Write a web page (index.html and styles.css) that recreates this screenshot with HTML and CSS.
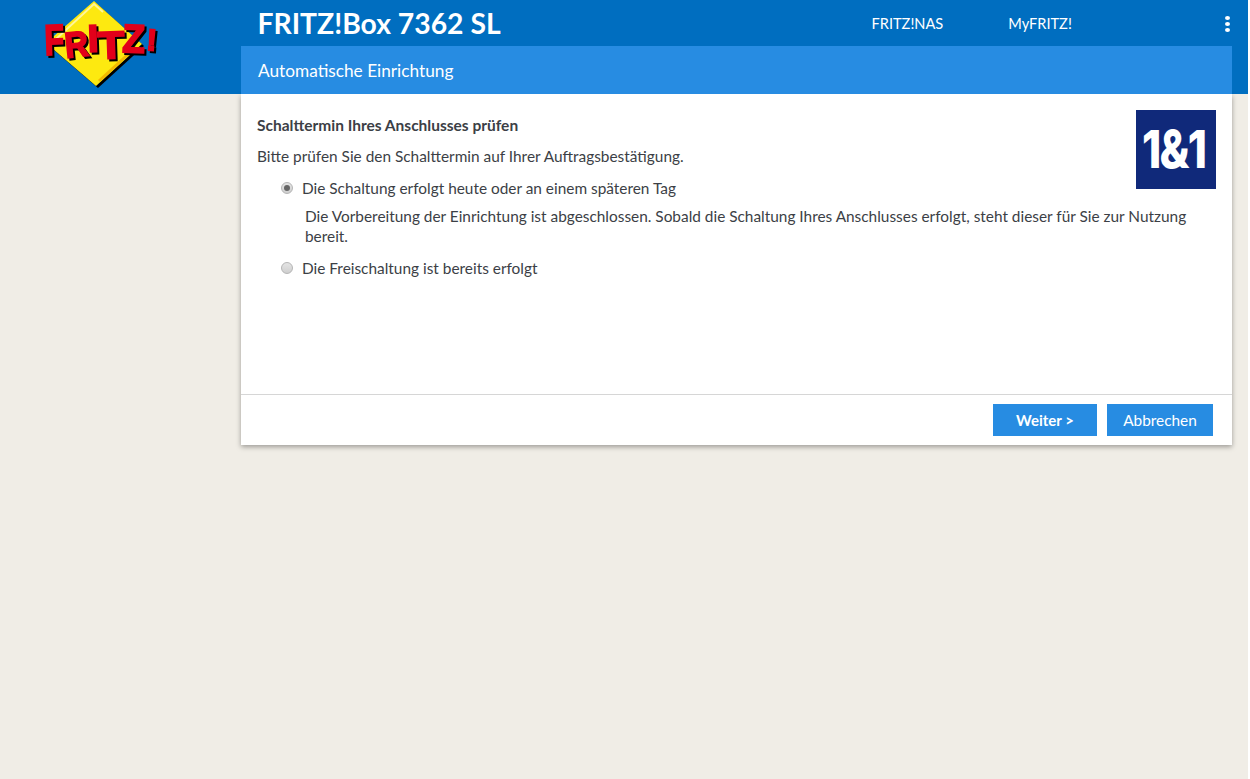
FILE: index.html
```html
<!DOCTYPE html>
<html lang="de">
<head>
<meta charset="utf-8">
<title>FRITZ!Box 7362 SL</title>
<link rel="stylesheet" href="styles.css">
</head>
<body>
<div class="page">
  <header class="top">
    <div class="logo-col">
      <svg class="logo" width="124" height="90" viewBox="0 0 124 90">
        <polygon points="53,3 101,46 55,88 5,45" fill="#000"/>
        <polygon points="51,1 99,44 53,86 3,43" fill="#fde910"/>
        <polyline points="12,40 51,4 60,12" fill="none" stroke="#fff59a" stroke-width="2"/>
        <polyline points="93,47 56,81" fill="none" stroke="#f2b800" stroke-width="3"/>
        <g class="logo-red">
          <text transform="translate(2 55) rotate(-2) scale(.76 1.02)">F</text>
          <text transform="translate(23 58) rotate(-6) scale(.78 .86)">R</text>
          <text transform="translate(45 52) rotate(-2) scale(.95 .92)">I</text>
          <text transform="translate(55 59) rotate(-2) scale(1.05 .92)">T</text>
          <text transform="translate(79 52) rotate(2) scale(.88 .95)">Z</text>
          <text class="logo-small" transform="translate(103 50) rotate(4)">!</text>
        </g>
      </svg>
    </div>
    <div class="top-main">
      <div class="top-row">
        <div class="product">FRITZ!Box 7362 SL</div>
        <nav class="links">
          <a class="link">FRITZ!NAS</a>
          <a class="link">MyFRITZ!</a>
        </nav>
        <div class="dots"><i></i><i></i><i></i></div>
      </div>
      <div class="page-title">Automatische Einrichtung</div>
    </div>
  </header>
  <main class="card">
    <div class="content">
      <svg class="brand" width="80" height="79" viewBox="0 0 80 79">
        <rect width="80" height="79" fill="#10297a"/>
        <text transform="translate(6 57.500) scale(.84 1)">1&amp;1</text>
      </svg>
      <h1 class="heading">Schalttermin Ihres Anschlusses prüfen</h1>
      <p class="intro">Bitte prüfen Sie den Schalttermin auf Ihrer Auftragsbestätigung.</p>
      <div class="option">
        <span class="radio checked"></span>
        <span>Die Schaltung erfolgt heute oder an einem späteren Tag</span>
      </div>
      <p class="detail">Die Vorbereitung der Einrichtung ist abgeschlossen. Sobald die Schaltung Ihres Anschlusses erfolgt, steht dieser für Sie zur Nutzung bereit.</p>
      <div class="option">
        <span class="radio"></span>
        <span>Die Freischaltung ist bereits erfolgt</span>
      </div>
    </div>
    <footer class="actions">
      <button class="btn btn-main">Weiter &gt;</button>
      <button class="btn">Abbrechen</button>
    </footer>
  </main>
</div>
</body>
</html>
```
FILE: styles.css
```css
* { box-sizing: border-box; }
html, body { margin: 0; height: 100%; background: #fff; }
body {
  font-family: Lato, "Noto Sans", sans-serif;
  font-size: 15.4px;
  color: #3c3f46;
  overflow: hidden;
}
.page { width: 1248px; height: 779px; background: #f0ede6; }
.top {
  display: flex;
  height: 94px;
  background: #006ec0;
}
.logo-col { width: 241px; flex: none; padding-left: 43px; }
.logo { display: block; }
.logo text {
  font-family: "Liberation Sans", sans-serif;
  font-weight: 700;
  font-size: 42px;
}
.logo .logo-small { font-size: 30px; }
.logo-red {
  fill: #e2001a;
  stroke: #e2001a;
  stroke-width: 2px;
  filter: drop-shadow(2px 2px 0 #000);
}
.top-main { width: 991px; flex: none; display: flex; flex-direction: column; }
.top-row { height: 46px; display: flex; align-items: center; padding-left: 16.5px; position: relative; }
.product { font-size: 28.3px; font-weight: 700; color: #fff; width: 614px; }
.links { display: flex; gap: 65px; }
.link { color: #fff; font-size: 14.6px; }
.dots {
  position: absolute;
  left: 984px;
  top: 16px;
  display: flex;
  flex-direction: column;
  gap: 2px;
}
.dots i { width: 5px; height: 4px; background: #fff; border-radius: 50%; display: block; }
.page-title {
  height: 48px;
  background: #278ce2;
  color: #fff;
  font-size: 17.25px;
  padding-left: 17px;
  display: flex;
  align-items: center;
}
.card {
  margin-left: 241px;
  width: 991px;
  height: 351px;
  background: #fff;
  box-shadow: 0 2px 5px rgba(0, 0, 0, .35);
  display: flex;
  flex-direction: column;
}
.content { height: 301px; border-bottom: 1px solid #d6d6d6; padding: 16px 16px 0; position: relative; }
.brand { position: absolute; right: 16px; top: 16px; display: block; }
.brand text {
  font-family: Inter, "Liberation Sans", sans-serif;
  font-weight: 800;
  font-size: 52px;
  letter-spacing: -2px;
  fill: #fff;
}
.heading { margin: 5px 0 0; font-size: 15.5px; font-weight: 700; line-height: 20px; height: 20px; }
.intro { margin: 11px 0 0; line-height: 20px; }
.option { display: flex; align-items: center; gap: 9px; padding-left: 24px; line-height: 20px; }
.intro + .option { margin-top: 12px; }
.detail { margin: 8px 20px 0 48px; line-height: 20px; }
.detail + .option { margin-top: 12px; }
.radio {
  width: 12px;
  height: 12px;
  border-radius: 50%;
  border: 1px solid #b5b5b5;
  background: linear-gradient(#e4e4e4, #cfcfcf);
  flex: none;
  position: relative;
}
.radio.checked::after {
  content: "";
  position: absolute;
  left: 2px;
  top: 2px;
  width: 6px;
  height: 6px;
  border-radius: 50%;
  background: #666;
}
.actions { flex: 1; display: flex; justify-content: flex-end; gap: 10px; padding: 9px 19px 0 0; }
.btn {
  height: 32px;
  width: 106px;
  border: 0;
  background: #278ce2;
  color: #fff;
  font-family: inherit;
  font-size: 15.4px;
  padding: 0;
}
.btn-main { width: 104px; font-weight: 700; font-size: 15px; }
```
